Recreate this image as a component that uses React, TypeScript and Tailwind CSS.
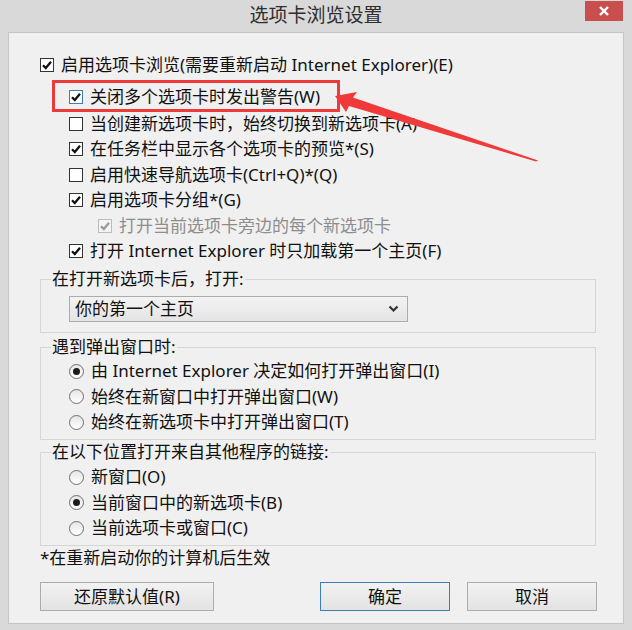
import React from 'react'

type Row = { label: string; checked: boolean; cls: string; hover?: boolean; disabled?: boolean }

const ROWS: Row[] = [
  { label: '启用选项卡浏览(需要重新启动 Internet Explorer)(E)', checked: true, cls: 'ml-[31px] h-[26px]' },
  { label: '关闭多个选项卡时发出警告(W)', checked: true, cls: 'ml-[60px] h-[28px] mt-[5px]', hover: true },
  { label: '当创建新选项卡时，始终切换到新选项卡(A)', checked: false, cls: 'ml-[60px] h-[25.5px]' },
  { label: '在任务栏中显示各个选项卡的预览*(S)', checked: true, cls: 'ml-[60px] h-[25.5px]' },
  { label: '启用快速导航选项卡(Ctrl+Q)*(Q)', checked: false, cls: 'ml-[60px] h-[25.5px]' },
  { label: '启用选项卡分组*(G)', checked: true, cls: 'ml-[60px] h-[25.5px]' },
  { label: '打开当前选项卡旁边的每个新选项卡', checked: true, cls: 'ml-[89px] h-[25.5px]', disabled: true },
  { label: '打开 Internet Explorer 时只加载第一个主页(F)', checked: true, cls: 'ml-[60px] h-[25.5px]' },
]

function CheckBox({ checked, hover, disabled }: { checked: boolean; hover?: boolean; disabled?: boolean }) {
  const box = disabled
    ? 'border-[#bcbcbc] bg-[#f4f4f4]'
    : hover
      ? 'border-[#3c7fb1] bg-white'
      : 'border-[#333333] bg-white'
  return (
    <span className={`w-[14px] h-[14px] shrink-0 border flex items-center justify-center ${box}`}>
      {checked && (
        <svg width="12" height="12" viewBox="0 0 12 12">
          <path d="M2 6.2 L4.8 9 L10 2.8" fill="none" stroke={disabled ? '#9a9a9a' : '#111'} strokeWidth="2.3" />
        </svg>
      )}
    </span>
  )
}

function Radio({ label, on }: { label: string; on?: boolean }) {
  return (
    <div className="ml-[28px] h-[25.5px] flex items-center gap-[7px]">
      <span className="w-[15px] h-[15px] shrink-0 rounded-full border border-[#6f6f6f] bg-linear-to-b from-[#e6e6e6] to-white flex items-center justify-center">
        {on && <span className="w-[7px] h-[7px] rounded-full bg-[#1a1a1a]" />}
      </span>
      <span>{label}</span>
    </div>
  )
}

function Btn({ children, cls }: { children: React.ReactNode; cls: string }) {
  return (
    <button className={`h-[29px] border bg-linear-to-b from-[#f2f2f2] to-[#e3e3e3] flex items-center justify-center text-[#111] ${cls}`}>
      {children}
    </button>
  )
}

export default function App() {
  return (
    <div className="relative w-[632px] h-[630px] bg-[#d9d9d9] overflow-hidden font-['Noto_Sans','Noto_Sans_CJK_SC',sans-serif] text-[17px] leading-[20px] text-[#111]">
      {/* title bar */}
      <div className="relative h-[32px] flex items-center justify-center pb-[2px]">
        <span className="text-[19px] leading-none text-[#2e2e2e]">选项卡浏览设置</span>
        <div className="absolute right-[9px] top-[1px] w-[38px] h-[20px] bg-[#c94f4f] flex items-center justify-center">
          <svg width="12" height="12" viewBox="0 0 12 12">
            <path d="M2 2 L10 10 M10 2 L2 10" stroke="#fff" strokeWidth="2.4" />
          </svg>
        </div>
      </div>

      {/* dialog body */}
      <div className="mx-[8px] h-[592px] border border-[#c4c4c4] bg-[#f0f0f0] pt-[19px]">
        {ROWS.map(r => (
          <div key={r.label} className={`flex items-center gap-[7px] ${r.cls}`}>
            <CheckBox checked={r.checked} hover={r.hover} disabled={r.disabled} />
            <span className={r.disabled ? 'text-[#8d8d8d]' : ''}>{r.label}</span>
          </div>
        ))}

        <fieldset className="ml-[31px] mt-[5px] w-[556px] border border-[#d6d6d6] pb-[10px]">
          <legend className="ml-[10px] px-[1px]">在打开新选项卡后，打开:</legend>
          <div className="ml-[28px] mt-[7px] w-[339px] h-[26px] border border-[#acacac] bg-linear-to-b from-[#f3f3f3] to-[#e4e4e4] flex items-center justify-between pl-[5px] pr-[8px]">
            <span>你的第一个主页</span>
            <svg width="11" height="8" viewBox="0 0 11 8">
              <path d="M1.5 1.5 L5.5 5.5 L9.5 1.5" fill="none" stroke="#333" strokeWidth="2.2" />
            </svg>
          </div>
        </fieldset>

        <fieldset className="ml-[31px] mt-[4px] w-[556px] border border-[#d6d6d6] pb-[4px]">
          <legend className="ml-[10px] px-[1px]">遇到弹出窗口时:</legend>
          <div className="mt-[1.5px]">
            <Radio label="由 Internet Explorer 决定如何打开弹出窗口(I)" on />
            <Radio label="始终在新窗口中打开弹出窗口(W)" />
            <Radio label="始终在新选项卡中打开弹出窗口(T)" />
          </div>
        </fieldset>

        <fieldset className="ml-[31px] mt-[2px] w-[556px] border border-[#d6d6d6] pb-[4px]">
          <legend className="ml-[10px] px-[1px]">在以下位置打开来自其他程序的链接:</legend>
          <div className="mt-[2.5px]">
            <Radio label="新窗口(O)" />
            <Radio label="当前窗口中的新选项卡(B)" on />
            <Radio label="当前选项卡或窗口(C)" />
          </div>
        </fieldset>

        <p className="ml-[31px] mt-[2px]">*在重新启动你的计算机后生效</p>

        <div className="ml-[31px] mt-[14px] w-[557px] flex">
          <Btn cls="w-[174px] border-[#acacac]">还原默认值(R)</Btn>
          <Btn cls="ml-auto w-[130px] border-[#3c7fb1]">确定</Btn>
          <Btn cls="ml-[17px] w-[130px] border-[#acacac]">取消</Btn>
        </div>
      </div>

      {/* annotation: red box + arrow */}
      <svg className="absolute left-0 top-0 pointer-events-none" width="632" height="630" viewBox="0 0 632 630">
        <rect x="53.5" y="81.5" width="285" height="29" fill="none" stroke="#ee3a3a" strokeWidth="3" />
        <polygon points="335,96 357,92 353,97.5 538,160.5 536,161.5 349,106 346,112" fill="#f03a3a" />
      </svg>
    </div>
  )
}
